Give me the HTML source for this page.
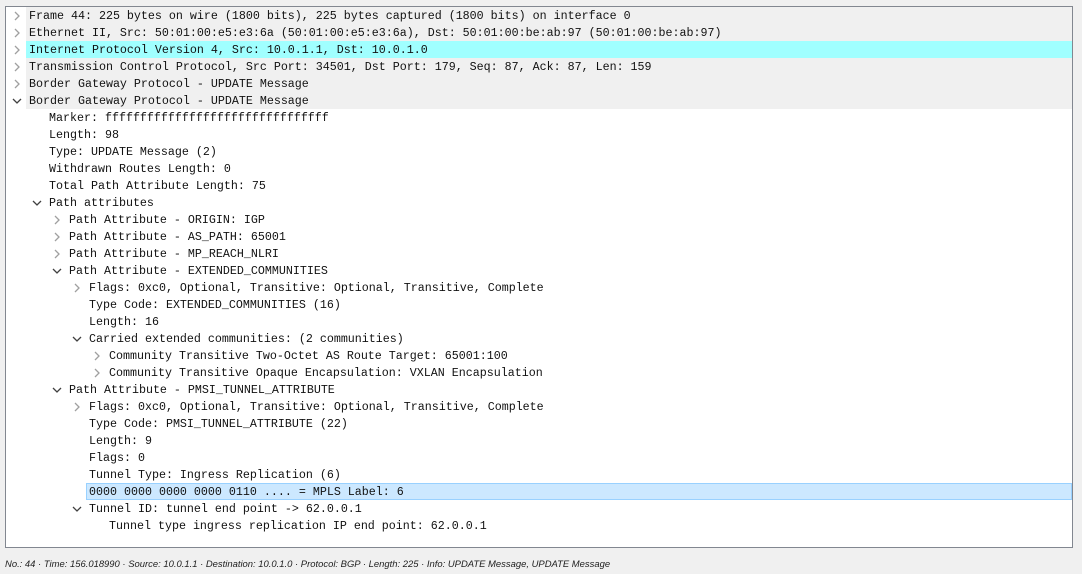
<!DOCTYPE html>
<html><head><meta charset="utf-8"><style>
body{margin:0;width:1082px;height:574px;background:#f0f0f0;position:relative;overflow:hidden;font-family:"Liberation Mono",monospace;}
#panel{position:absolute;left:5px;top:6px;width:1066px;height:540px;background:#fff;border:1px solid #828790;}
.r{position:absolute;height:17px;line-height:17px;font-size:11.67px;color:#111;white-space:pre;}
.bg{position:absolute;height:17px;left:26px;width:1046px;background:#f0f0f0;}
.ar{position:absolute;width:14px;height:17px;}
#status{position:absolute;left:5px;top:559px;font-family:"Liberation Sans",sans-serif;font-style:italic;font-size:9.45px;color:#222;letter-spacing:0px;white-space:pre;}
</style></head><body>
<div id="panel"></div>
<div class="bg" style="top:7px"></div>
<div class="bg" style="top:24px"></div>
<div class="bg" style="top:41px;background:#a0ffff"></div>
<div class="bg" style="top:58px"></div>
<div class="bg" style="top:75px"></div>
<div class="bg" style="top:92px"></div>
<div style="position:absolute;left:86px;top:483px;width:984px;height:15px;background:#cce8ff;border:1px solid #99d1ff"></div>
<div id="rows"></div>
<script>
var rows=[
[0,'c','Frame 44: 225 bytes on wire (1800 bits), 225 bytes captured (1800 bits) on interface 0'],
[0,'c','Ethernet II, Src: 50:01:00:e5:e3:6a (50:01:00:e5:e3:6a), Dst: 50:01:00:be:ab:97 (50:01:00:be:ab:97)'],
[0,'c','Internet Protocol Version 4, Src: 10.0.1.1, Dst: 10.0.1.0'],
[0,'c','Transmission Control Protocol, Src Port: 34501, Dst Port: 179, Seq: 87, Ack: 87, Len: 159'],
[0,'c','Border Gateway Protocol - UPDATE Message'],
[0,'e','Border Gateway Protocol - UPDATE Message'],
[1,'','Marker: ffffffffffffffffffffffffffffffff'],
[1,'','Length: 98'],
[1,'','Type: UPDATE Message (2)'],
[1,'','Withdrawn Routes Length: 0'],
[1,'','Total Path Attribute Length: 75'],
[1,'e','Path attributes'],
[2,'c','Path Attribute - ORIGIN: IGP'],
[2,'c','Path Attribute - AS_PATH: 65001'],
[2,'c','Path Attribute - MP_REACH_NLRI'],
[2,'e','Path Attribute - EXTENDED_COMMUNITIES'],
[3,'c','Flags: 0xc0, Optional, Transitive: Optional, Transitive, Complete'],
[3,'','Type Code: EXTENDED_COMMUNITIES (16)'],
[3,'','Length: 16'],
[3,'e','Carried extended communities: (2 communities)'],
[4,'c','Community Transitive Two-Octet AS Route Target: 65001:100'],
[4,'c','Community Transitive Opaque Encapsulation: VXLAN Encapsulation'],
[2,'e','Path Attribute - PMSI_TUNNEL_ATTRIBUTE'],
[3,'c','Flags: 0xc0, Optional, Transitive: Optional, Transitive, Complete'],
[3,'','Type Code: PMSI_TUNNEL_ATTRIBUTE (22)'],
[3,'','Length: 9'],
[3,'','Flags: 0'],
[3,'','Tunnel Type: Ingress Replication (6)'],
[3,'','0000 0000 0000 0000 0110 .... = MPLS Label: 6'],
[3,'e','Tunnel ID: tunnel end point -> 62.0.0.1'],
[4,'','Tunnel type ingress replication IP end point: 62.0.0.1']];
var h='';
rows.forEach(function(r,i){
 var top=7+i*17, x=29+r[0]*20;
 h+='<div class="r" style="left:'+x+'px;top:'+(top+1)+'px">'+r[2].replace(/&/g,'&amp;').replace(/</g,'&lt;').replace(/>/g,'&gt;')+'</div>';
 if(r[1]){
  var ax=x-19;
  var p=r[1]=='c'?'M5 5 L9 9 L5 13':'M3 7 L7 11 L11 7';
  var col=r[1]=='c'?'#a0a0a0':'#404040';
  h+='<svg class="ar" style="left:'+ax+'px;top:'+top+'px" width="14" height="17"><path d="'+p+'" fill="none" stroke="'+col+'" stroke-width="1.3"/></svg>';
 }
});
document.getElementById('rows').innerHTML=h;
</script>
<div id="status">No.: 44 · Time: 156.018990 · Source: 10.0.1.1 · Destination: 10.0.1.0 · Protocol: BGP · Length: 225 · Info: UPDATE Message, UPDATE Message</div>
</body></html>
